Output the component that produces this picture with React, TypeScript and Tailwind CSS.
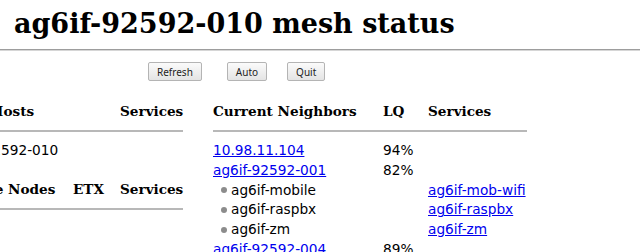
import React from 'react';

const serif = "font-['DejaVu_Serif',serif]";
const sans = "font-['DejaVu_Sans',sans-serif]";

type Neighbor = { name: string; lq?: string; sub?: boolean; service?: string };

const neighbors: Neighbor[] = [
  { name: '10.98.11.104', lq: '94%' },
  { name: 'ag6if-92592-001', lq: '82%' },
  { name: 'ag6if-mobile', sub: true, service: 'ag6if-mob-wifi' },
  { name: 'ag6if-raspbx', sub: true, service: 'ag6if-raspbx' },
  { name: 'ag6if-zm', sub: true, service: 'ag6if-zm' },
  { name: 'ag6if-92592-004', lq: '89%' },
];

const Button: React.FC<{ label: string; className?: string }> = ({ label, className }) => (
  <button
    className={`h-[19px] px-[8px] rounded-[2px] border border-[#b4b4b4] bg-gradient-to-b from-[#fbfbfb] to-[#e4e4e4] text-[10px] text-[#222] font-['Noto_Sans',sans-serif] leading-none ${className ?? ''}`}
  >
    {label}
  </button>
);

const HeadCell: React.FC<{ w: string; children?: React.ReactNode; right?: boolean }> = ({ w, children, right }) => (
  <div className={`${w} ${right ? 'text-right' : ''} font-bold whitespace-nowrap`}>{children}</div>
);

export default function App() {
  return (
    <div className="w-[640px] h-[252px] overflow-hidden bg-white text-black">
      <h1 className={`${serif} font-bold text-[27px] leading-[32px] pl-[14px] pt-[8px]`}>ag6if-92592-010 mesh status</h1>
      <div className="mt-[9px] border-t border-[#9d9d9d] border-b border-b-[#d6d6d6]" />

      <div className="flex pl-[148px] pt-[11px] gap-[25px]">
        <Button label="Refresh" />
        <Button label="Auto" />
        <Button label="Quit" className="-ml-[5px]" />
      </div>

      <div className="flex items-start ml-[-55px] pt-[20px]">
        {/* local hosts + remote nodes */}
        <div className="w-[238px]">
          <div className={`flex h-[20px] leading-[20px] text-[13.6px] ${serif}`}>
            <HeadCell w="w-[175px]">Local Hosts</HeadCell>
            <HeadCell w="w-[63px]" right>Services</HeadCell>
          </div>
          <div className="mt-[9px] border-t-2 border-[#b8b8b8]" />
          <div className={`mt-[9px] h-[19.8px] leading-[19.8px] text-[13.7px] ${sans}`}>ag6if-92592-010</div>

          <div className={`mt-[18px] flex h-[20px] leading-[20px] text-[13.6px] ${serif}`}>
            <HeadCell w="w-[128px]">
              <span className="block text-right w-[110px]">Remote Nodes</span>
            </HeadCell>
            <HeadCell w="w-[47px]">ETX</HeadCell>
            <HeadCell w="w-[63px]" right>Services</HeadCell>
          </div>
          <div className="mt-[9px] border-t-2 border-[#b8b8b8]" />
        </div>

        {/* current neighbors */}
        <div className="ml-[30px] w-[314px]">
          <div className={`flex h-[20px] leading-[20px] text-[13.6px] ${serif}`}>
            <HeadCell w="w-[170px]">Current Neighbors</HeadCell>
            <HeadCell w="w-[45px]">LQ</HeadCell>
            <HeadCell w="w-[99px]">Services</HeadCell>
          </div>
          <div className="mt-[9px] border-t-2 border-[#b8b8b8]" />
          <div className={`mt-[9px] text-[13.7px] ${sans}`}>
            {neighbors.map((n) => (
              <div key={n.name} className="flex h-[19.8px] leading-[19.8px]">
                <div className="w-[170px] flex items-center">
                  {n.sub ? (
                    <>
                      <span className="ml-[8px] mr-[4px] w-[6px] h-[6px] rounded-full bg-[#8c8c8c]" />
                      <span>{n.name}</span>
                    </>
                  ) : (
                    <a href="#" className="text-[#0000ee] underline">{n.name}</a>
                  )}
                </div>
                <div className="w-[45px]">{n.lq}</div>
                <div className="w-[99px] whitespace-nowrap">
                  {n.service && <a href="#" className="text-[#0000ee] underline">{n.service}</a>}
                </div>
              </div>
            ))}
          </div>
        </div>
      </div>
    </div>
  );
}
